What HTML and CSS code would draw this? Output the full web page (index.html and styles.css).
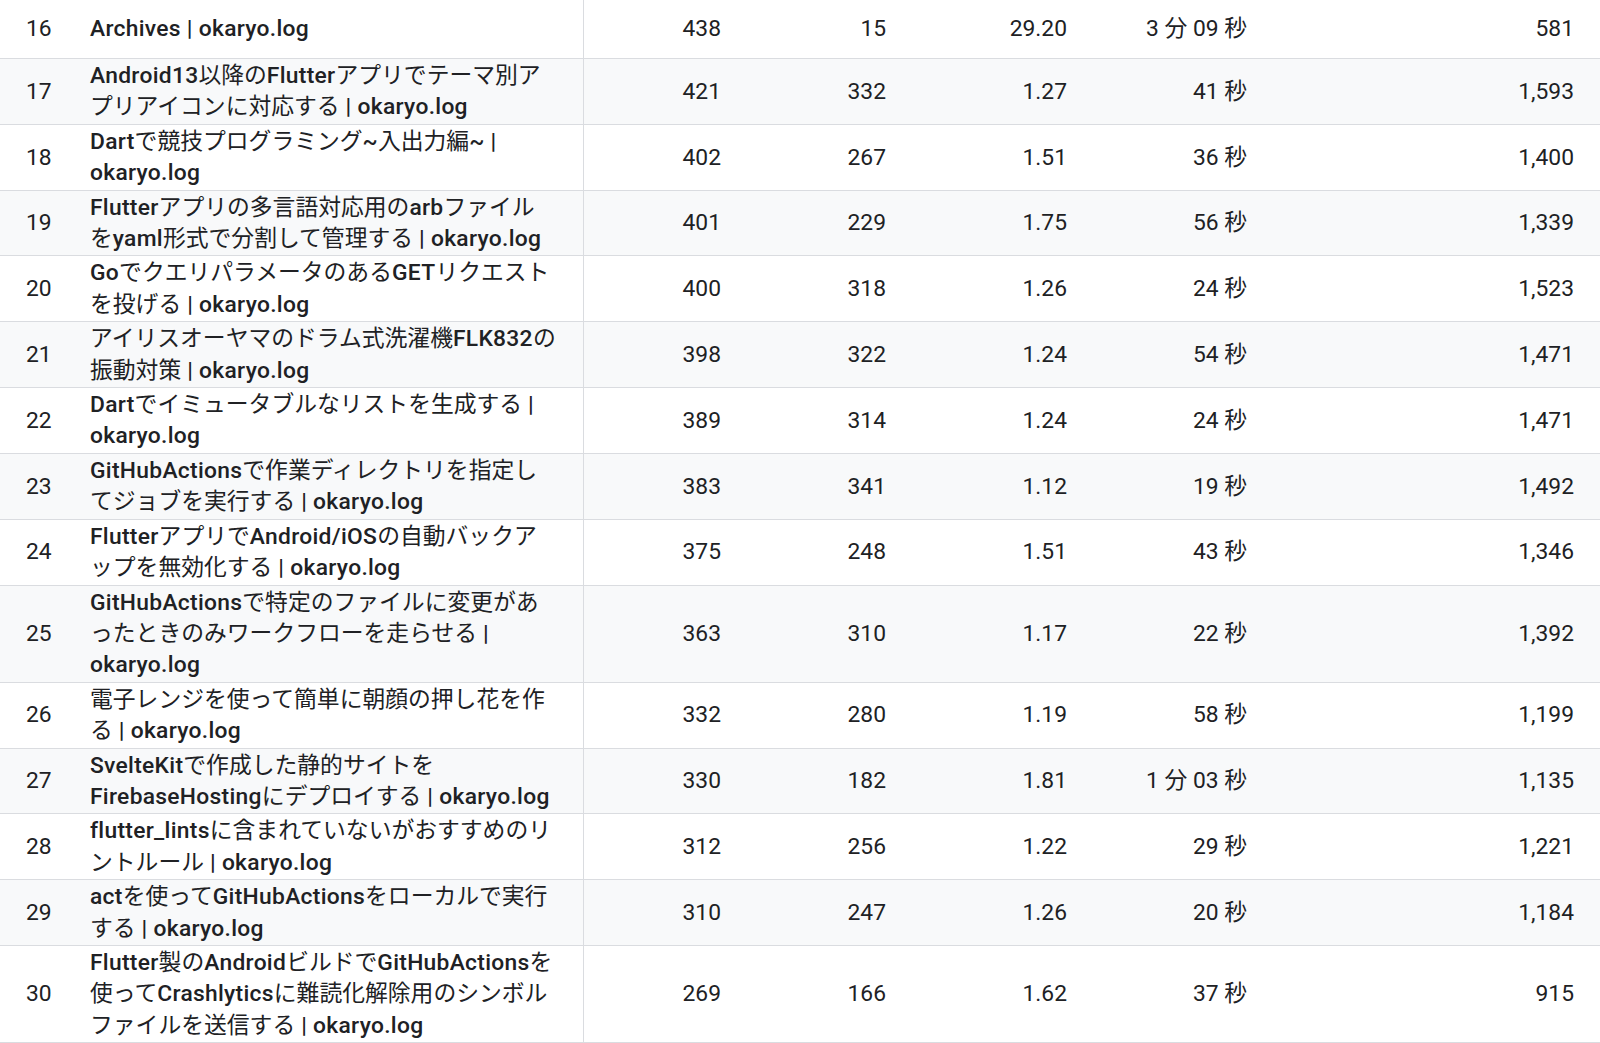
FILE: index.html
```html
<!DOCTYPE html>
<html lang="ja">
<head>
<meta charset="utf-8">
<title>ページ別レポート</title>
<link rel="stylesheet" href="styles.css">
</head>
<body>
<div class="report">
  <div class="row">
    <div class="cell rank">16</div>
    <div class="cell title"><span class="en">Archives | okaryo.log</span></div>
    <div class="cell num">438</div><div class="cell num">15</div><div class="cell num">29.20</div><div class="cell num">3 分 09 秒</div><div class="cell num">581</div>
  </div>
  <div class="row alt">
    <div class="cell rank">17</div>
    <div class="cell title"><span><span class="en">Android13</span>以降の<span class="en">Flutter</span>アプリでテーマ別ア<br>プリアイコンに対応する<span class="en"> | okaryo.log</span></span></div>
    <div class="cell num">421</div><div class="cell num">332</div><div class="cell num">1.27</div><div class="cell num">41 秒</div><div class="cell num">1,593</div>
  </div>
  <div class="row">
    <div class="cell rank">18</div>
    <div class="cell title"><span><span class="en">Dart</span>で競技プログラミング<span class="en">~</span>入出力編<span class="en">~ |</span><br><span class="en">okaryo.log</span></span></div>
    <div class="cell num">402</div><div class="cell num">267</div><div class="cell num">1.51</div><div class="cell num">36 秒</div><div class="cell num">1,400</div>
  </div>
  <div class="row alt">
    <div class="cell rank">19</div>
    <div class="cell title"><span><span class="en">Flutter</span>アプリの多言語対応用の<span class="en">arb</span>ファイル<br>を<span class="en">yaml</span>形式で分割して管理する<span class="en"> | okaryo.log</span></span></div>
    <div class="cell num">401</div><div class="cell num">229</div><div class="cell num">1.75</div><div class="cell num">56 秒</div><div class="cell num">1,339</div>
  </div>
  <div class="row">
    <div class="cell rank">20</div>
    <div class="cell title"><span><span class="en">Go</span>でクエリパラメータのある<span class="en">GET</span>リクエスト<br>を投げる<span class="en"> | okaryo.log</span></span></div>
    <div class="cell num">400</div><div class="cell num">318</div><div class="cell num">1.26</div><div class="cell num">24 秒</div><div class="cell num">1,523</div>
  </div>
  <div class="row alt">
    <div class="cell rank">21</div>
    <div class="cell title"><span>アイリスオーヤマのドラム式洗濯機<span class="en">FLK832</span>の<br>振動対策<span class="en"> | okaryo.log</span></span></div>
    <div class="cell num">398</div><div class="cell num">322</div><div class="cell num">1.24</div><div class="cell num">54 秒</div><div class="cell num">1,471</div>
  </div>
  <div class="row">
    <div class="cell rank">22</div>
    <div class="cell title"><span><span class="en">Dart</span>でイミュータブルなリストを生成する<span class="en"> |</span><br><span class="en">okaryo.log</span></span></div>
    <div class="cell num">389</div><div class="cell num">314</div><div class="cell num">1.24</div><div class="cell num">24 秒</div><div class="cell num">1,471</div>
  </div>
  <div class="row alt">
    <div class="cell rank">23</div>
    <div class="cell title"><span><span class="en">GitHubActions</span>で作業ディレクトリを指定し<br>てジョブを実行する<span class="en"> | okaryo.log</span></span></div>
    <div class="cell num">383</div><div class="cell num">341</div><div class="cell num">1.12</div><div class="cell num">19 秒</div><div class="cell num">1,492</div>
  </div>
  <div class="row">
    <div class="cell rank">24</div>
    <div class="cell title"><span><span class="en">Flutter</span>アプリで<span class="en">Android/iOS</span>の自動バックア<br>ップを無効化する<span class="en"> | okaryo.log</span></span></div>
    <div class="cell num">375</div><div class="cell num">248</div><div class="cell num">1.51</div><div class="cell num">43 秒</div><div class="cell num">1,346</div>
  </div>
  <div class="row alt">
    <div class="cell rank">25</div>
    <div class="cell title"><span><span class="en">GitHubActions</span>で特定のファイルに変更があ<br>ったときのみワークフローを走らせる<span class="en"> |</span><br><span class="en">okaryo.log</span></span></div>
    <div class="cell num">363</div><div class="cell num">310</div><div class="cell num">1.17</div><div class="cell num">22 秒</div><div class="cell num">1,392</div>
  </div>
  <div class="row">
    <div class="cell rank">26</div>
    <div class="cell title"><span>電子レンジを使って簡単に朝顔の押し花を作<br>る<span class="en"> | okaryo.log</span></span></div>
    <div class="cell num">332</div><div class="cell num">280</div><div class="cell num">1.19</div><div class="cell num">58 秒</div><div class="cell num">1,199</div>
  </div>
  <div class="row alt">
    <div class="cell rank">27</div>
    <div class="cell title"><span><span class="en">SvelteKit</span>で作成した静的サイトを<br><span class="en">FirebaseHosting</span>にデプロイする<span class="en"> | okaryo.log</span></span></div>
    <div class="cell num">330</div><div class="cell num">182</div><div class="cell num">1.81</div><div class="cell num">1 分 03 秒</div><div class="cell num">1,135</div>
  </div>
  <div class="row">
    <div class="cell rank">28</div>
    <div class="cell title"><span><span class="en">flutter_lints</span>に含まれていないがおすすめのリ<br>ントルール<span class="en"> | okaryo.log</span></span></div>
    <div class="cell num">312</div><div class="cell num">256</div><div class="cell num">1.22</div><div class="cell num">29 秒</div><div class="cell num">1,221</div>
  </div>
  <div class="row alt">
    <div class="cell rank">29</div>
    <div class="cell title"><span><span class="en">act</span>を使って<span class="en">GitHubActions</span>をローカルで実行<br>する<span class="en"> | okaryo.log</span></span></div>
    <div class="cell num">310</div><div class="cell num">247</div><div class="cell num">1.26</div><div class="cell num">20 秒</div><div class="cell num">1,184</div>
  </div>
  <div class="row">
    <div class="cell rank">30</div>
    <div class="cell title"><span><span class="en">Flutter</span>製の<span class="en">Android</span>ビルドで<span class="en">GitHubActions</span>を<br>使って<span class="en">Crashlytics</span>に難読化解除用のシンボル<br>ファイルを送信する<span class="en"> | okaryo.log</span></span></div>
    <div class="cell num">269</div><div class="cell num">166</div><div class="cell num">1.62</div><div class="cell num">37 秒</div><div class="cell num">915</div>
  </div>
</div>
</body>
</html>
```

FILE: styles.css
```css
html, body {
  margin: 0;
  padding: 0;
  background: #ffffff;
}

body {
  font-family: Roboto, "Noto Sans CJK JP", sans-serif;
  color: #202124;
  width: 1600px;
  height: 1043px;
  overflow: hidden;
}

.report {
  width: 1600px;
  font-size: 22.8px;
  line-height: 31.4px;
}

.row {
  display: grid;
  grid-template-columns: 90px 494px 137px 165px 181px 180px 327px 26px;
  min-height: 58px;
  border-bottom: 1px solid #dadce0;
  background: #ffffff;
}

.row.alt {
  background: #f8f9fa;
}

.cell {
  display: flex;
  align-items: center;
  padding: 1px 0;
  white-space: nowrap;
}

.rank {
  padding-left: 26px;
}

.title {
  padding-right: 20px;
  border-right: 1px solid #dadce0;
  white-space: normal;
}

.en {
  font-weight: 500;
  letter-spacing: 0.3px;
}

.num {
  justify-content: flex-end;
}
```
